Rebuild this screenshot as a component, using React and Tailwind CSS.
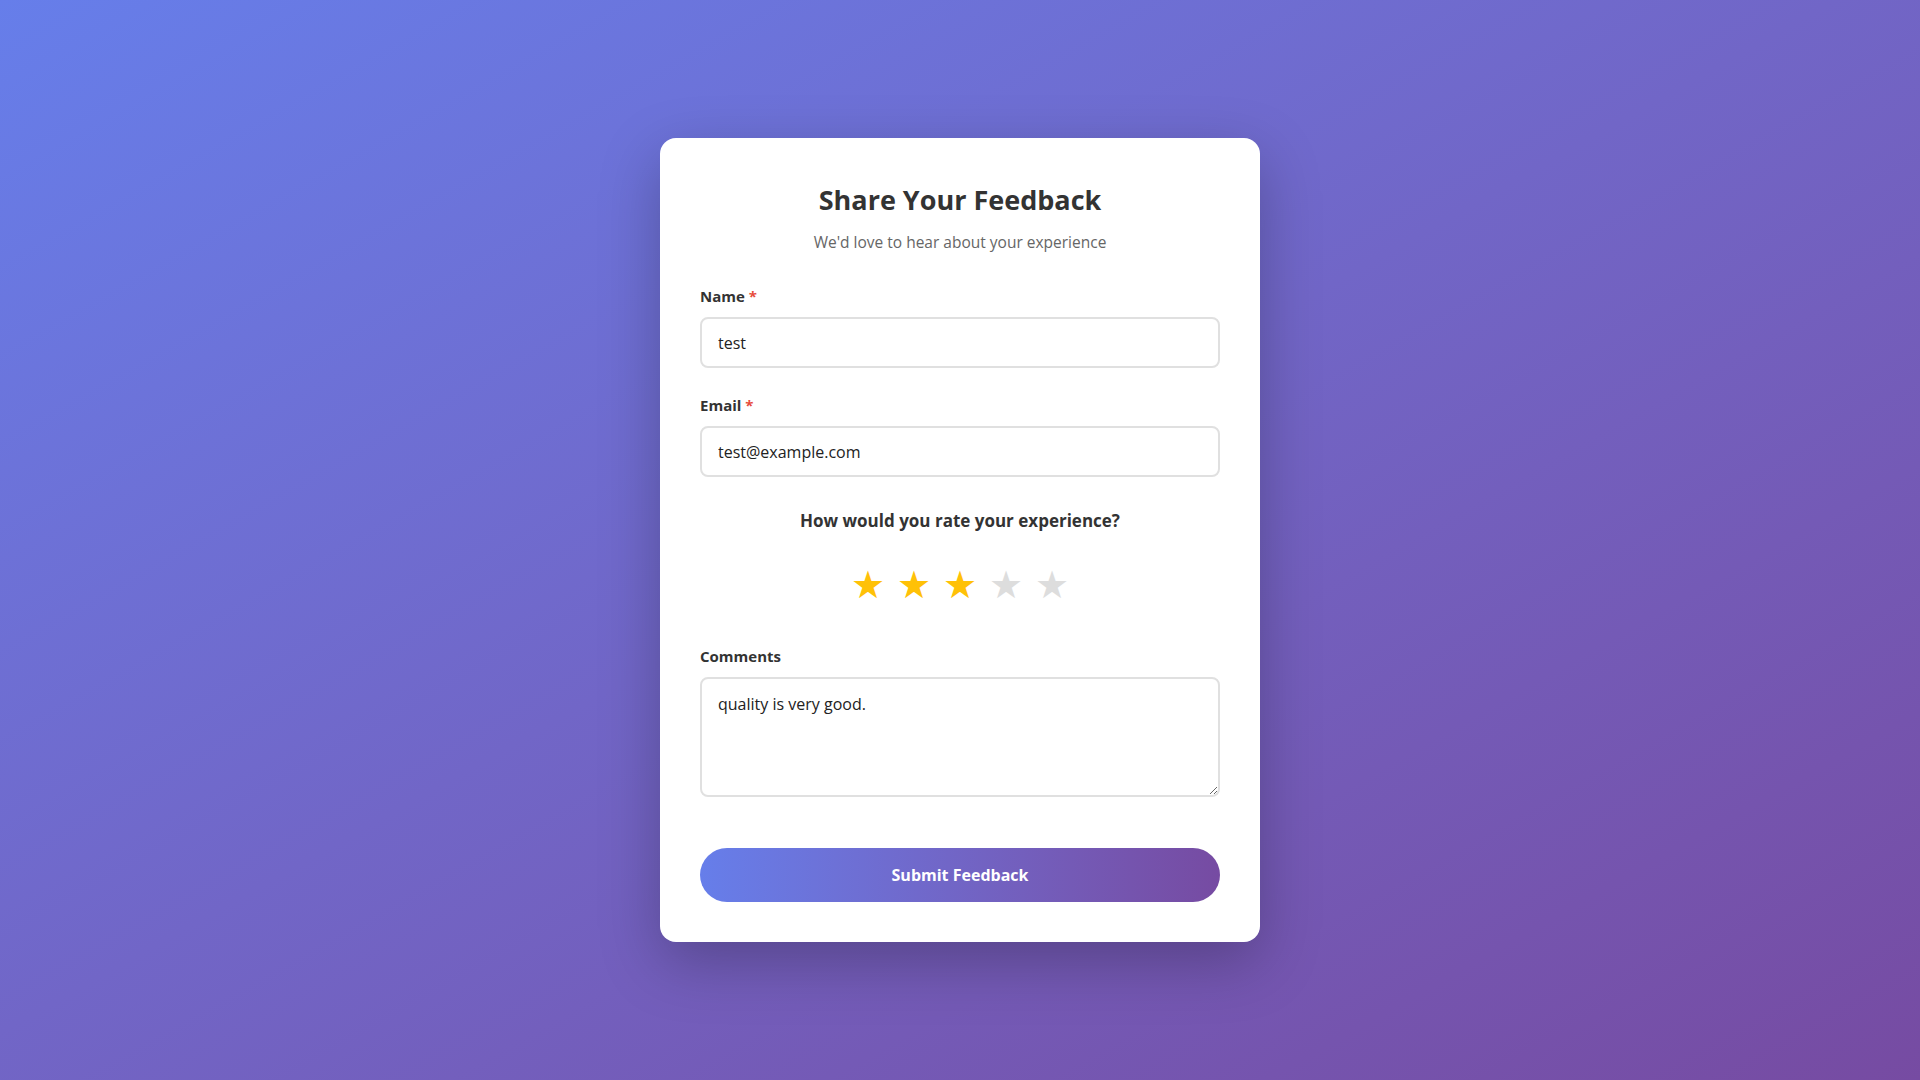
import React, { useState } from 'react';

const font = { fontFamily: '"Open Sans", "Noto Sans", sans-serif' };

const Label = ({ children, required }) => (
  <label className="block text-[15px] leading-[20px] font-bold text-[#333]">
    {children}
    {required && <span className="text-[#e74c3c]"> *</span>}
  </label>
);

export default function App() {
  const [name, setName] = useState('test');
  const [email, setEmail] = useState('test@example.com');
  const [rating, setRating] = useState(3);
  const [comments, setComments] = useState('quality is very good.');

  return (
    <div
      className="min-h-screen w-full flex items-center justify-center bg-gradient-to-br from-[#667eea] to-[#764ba2]"
      style={font}
    >
      <div className="w-[600px] bg-white rounded-[16px] shadow-[0_20px_60px_rgba(0,0,0,0.25)] px-10 pt-10 pb-[40px]">
        <h1 className="text-center text-[27px] leading-[44px] font-bold text-[#333]">
          Share Your Feedback
        </h1>
        <p className="mt-2 text-center text-[15.5px] leading-[24px] text-[#666]">
          We'd love to hear about your experience
        </p>

        <div className="mt-8">
          <Label required>Name</Label>
          <input
            value={name}
            onChange={(e) => setName(e.target.value)}
            className="mt-[11px] block w-full h-[51px] px-4 border-2 border-[#e0e0e0] rounded-[8px] text-[16px] text-[#222] outline-none"
          />
        </div>

        <div className="mt-[27px]">
          <Label required>Email</Label>
          <input
            value={email}
            onChange={(e) => setEmail(e.target.value)}
            className="mt-[11px] block w-full h-[51px] px-4 border-2 border-[#e0e0e0] rounded-[8px] text-[16px] text-[#222] outline-none"
          />
        </div>

        <p className="mt-8 text-center text-[17px] leading-[24px] font-bold text-[#333]">
          How would you rate your experience?
        </p>
        <div className="mt-[30px] flex justify-center gap-[7px]">
          {[1, 2, 3, 4, 5].map((n) => (
            <button
              key={n}
              onClick={() => setRating(n)}
              className={`w-[39px] text-[38px] leading-[40px] ${n <= rating ? 'text-[#ffc107]' : 'text-[#dddddd]'}`}
            >
              ★
            </button>
          ))}
        </div>

        <div className="mt-[43px]">
          <Label>Comments</Label>
          <textarea
            value={comments}
            onChange={(e) => setComments(e.target.value)}
            className="mt-[11px] block w-full h-[120px] px-4 py-[13px] border-2 border-[#e0e0e0] rounded-[8px] text-[16px] leading-[24px] text-[#222] outline-none"
          />
        </div>

        <button className="mt-[51px] block w-full h-[54px] rounded-full bg-gradient-to-r from-[#667eea] to-[#764ba2] text-white text-[16px] font-bold">
          Submit Feedback
        </button>
      </div>
    </div>
  );
}
